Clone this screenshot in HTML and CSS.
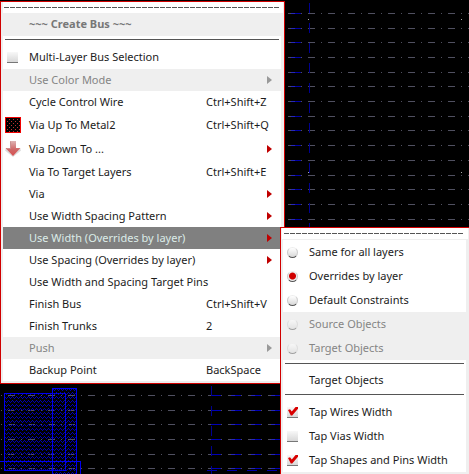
FILE: index.html
```html
<!DOCTYPE html>
<html lang="en">
<head>
<meta charset="utf-8">
<title>Create Bus</title>
<link rel="stylesheet" href="styles.css">
</head>
<body>
<svg class="canvas" aria-hidden="true" shape-rendering="crispEdges">
  <defs>
    <pattern id="hatch" width="4" height="4" patternUnits="userSpaceOnUse">
      <path d="M0 0h1v1h-1zM1 1h1v1h-1zM2 2h1v1h-1zM3 1h1v1h-1z" fill="#0000b4"/>
    </pattern>
  </defs>
  <g class="tracks" transform="translate(0 .5)">
    <path d="M-12 13H2000M-12 28H2000M-12 42H2000M-12 57H2000M-12 72H2000M-12 86H2000M-12 101H2000M-12 116H2000M-12 130H2000M-12 145H2000M-12 160H2000M-12 175H2000M-12 189H2000M-12 204H2000M-12 219H2000M-12 395H2000M-12 410H2000M-12 424H2000M-12 439H2000M-12 454H2000M-12 468H2000"/>
  </g>
  <g transform="translate(0 .5)" fill="none">
    <path stroke="#0000a8" d="M291 13h10M291 28h10M291 42h10M291 57h10M291 72h10M291 86h10M291 101h10M291 116h10M291 130h10M291 145h10M291 160h10M291 175h10M291 189h10M291 204h10M291 219h10"/>
    <path stroke="#2828b8" d="M291 13h4M291 28h4M291 42h4M291 57h4M291 72h4M291 86h4M291 101h4M291 116h4M291 130h4M291 145h4M291 160h4M291 175h4M291 189h4M291 204h4M291 219h4"/>
    <path stroke="#0000b8" stroke-dasharray="10 10" d="M211 395h70M211 410h70M211 424h70M211 439h70M211 454h70M211 468h70"/>
    <path stroke="#2828b8" stroke-dasharray="4 16" d="M231 395h50M231 410h50M231 424h50M231 439h50M231 454h50M231 468h50"/>
    <path stroke="#0000a8" stroke-dasharray="10 10" d="M207 470h74"/>
  </g>
  <g stroke="#000090" stroke-dasharray="10 10">
    <path d="M309.500 3V227M211.500 386V474"/>
  </g>
  <path fill="#aaa" d="M308 19h1v1h-1zM461 19h1v1h-1zM308 172h1v1h-1zM461 172h1v1h-1z"/>
  <g fill="url(#hatch)" stroke="#0000f0">
    <rect x="4.500" y="393.500" width="61" height="77"/>
    <rect x="52.500" y="388.500" width="24" height="100"/>
    <rect x="-1.500" y="461.500" width="82" height="40" fill="none"/>
  </g>
</svg>

<main class="menu">
  <div class="tear"></div>
  <h1 class="title">~~~ Create Bus ~~~</h1>
  <hr>
  <label class="item tall"><input type="checkbox"><span>Multi-Layer Bus Selection</span></label>
  <button class="item sub" disabled><span>Use Color Mode</span></button>
  <button class="item"><span>Cycle Control Wire</span><kbd>Ctrl+Shift+Z</kbd></button>
  <button class="item tall">
    <svg class="icon" viewBox="0 0 16 16" shape-rendering="crispEdges" aria-hidden="true">
      <defs><pattern id="dots" width="4" height="4" patternUnits="userSpaceOnUse"><path d="M0 2h1v1h-1zM2 0h1v1h-1z" fill="#c03030"/></pattern></defs>
      <rect width="16" height="16" fill="#f00000"/><rect x="1" y="1" width="14" height="14"/><rect x="1" y="1" width="14" height="14" fill="url(#dots)"/>
    </svg>
    <span>Via Up To Metal2</span><kbd>Ctrl+Shift+Q</kbd></button>
  <button class="item tall sub">
    <svg class="icon" viewBox="0 0 16 16" aria-hidden="true">
      <defs><linearGradient id="fade" x2="0" y2="1"><stop stop-color="#deb4b4"/><stop offset=".55" stop-color="#cf6868"/><stop offset="1" stop-color="#d85050"/></linearGradient></defs>
      <path d="M0 9.500 8 16 16 9.500 15 7.500H1z" fill="#ddd"/>
      <path d="M5 0h6v7h4.500L8 15 .5 7H5z" fill="url(#fade)"/>
      <path d="M5.500 .5V7.500H2" fill="none" stroke="#c89090"/>
    </svg>
    <span>Via Down To ...</span></button>
  <button class="item"><span>Via To Target Layers</span><kbd>Ctrl+Shift+E</kbd></button>
  <button class="item sub"><span>Via</span></button>
  <button class="item sub"><span>Use Width Spacing Pattern</span></button>
  <button class="item sub open"><span>Use Width (Overrides by layer)</span></button>
  <button class="item sub"><span>Use Spacing (Overrides by layer)</span></button>
  <button class="item"><span>Use Width and Spacing Target Pins</span></button>
  <button class="item"><span>Finish Bus</span><kbd>Ctrl+Shift+V</kbd></button>
  <button class="item"><span>Finish Trunks</span><kbd>2</kbd></button>
  <button class="item sub" disabled><span>Push</span></button>
  <button class="item"><span>Backup Point</span><kbd>BackSpace</kbd></button>
</main>

<section class="menu submenu" aria-label="Use Width">
  <div class="tear"></div>
  <label class="item tall"><input type="radio" name="width"><span>Same for all layers</span></label>
  <label class="item tall"><input type="radio" name="width" checked><span>Overrides by layer</span></label>
  <label class="item tall"><input type="radio" name="width"><span>Default Constraints</span></label>
  <label class="item tall off"><input type="radio" name="width" disabled><span>Source Objects</span></label>
  <label class="item tall off"><input type="radio" name="width" disabled><span>Target Objects</span></label>
  <hr>
  <button class="item"><span>Target Objects</span></button>
  <hr>
  <label class="item tall"><input type="checkbox" checked><span>Tap Wires Width</span></label>
  <label class="item tall"><input type="checkbox"><span>Tap Vias Width</span></label>
  <label class="item tall"><input type="checkbox" checked><span>Tap Shapes and Pins Width</span></label>
</section>
</body>
</html>
```
FILE: styles.css
```css
* {
  box-sizing: border-box;
}

body {
  position: relative;
  min-height: 100vh;
  margin: 0;
  padding-top: 1px;
  overflow: hidden;
  background: #000;
  color: #1c1c1c;
  font: 11px/16px "Noto Sans", "Open Sans", sans-serif;
}

.canvas {
  position: absolute;
  inset: 0;
  width: 100%;
  height: 100%;
}

.tracks {
  fill: none;
  stroke: #505060;
  stroke-dasharray: 7 6 1 6;
}

.menu {
  position: relative;
  width: max-content;
  min-width: 285px;
  padding: 0 3px 2px 2px;
  border: 1px solid #d00000;
  background: #efefef;
}

.submenu {
  position: absolute;
  top: 227px;
  right: 0;
  bottom: 0;
  left: 280px;
  width: auto;
  min-width: 0;
  border-width: 1px 0 0 1px;
}

.tear {
  height: 11px;
  margin-right: -2px;
  padding: 5px 4px 5px 1px;
  background: repeating-linear-gradient(90deg, #555 0 5px, #fff 5px 6px) content-box, #fff;
}

.submenu .tear {
  margin: 0 -2px 1px -1px;
  padding-left: 2px;
}

.title {
  margin: 0 -2px 0 0;
  padding: 3px 26px 4px;
  color: #777;
  font-size: 11px;
  line-height: 16px;
}

hr {
  height: 9px;
  margin: 0;
  border: solid #fff;
  border-width: 3px 2px 5px;
  background: #555;
}

.item {
  display: grid;
  grid-template-columns: 20px 1fr 75px;
  align-items: center;
  width: 100%;
  height: 22px;
  padding: 0;
  border: 0;
  background: #fff;
  color: inherit;
  font: inherit;
  text-align: left;
  white-space: nowrap;
}

.tall {
  height: 24px;
}

.item span {
  grid-area: 1 / 2 / 2 / 4;
  padding-left: 6px;
}

.item kbd {
  grid-area: 1 / 3;
  font: inherit;
}

.item:disabled,
.off {
  background: #efefef;
  color: #858585;
}

.open {
  background: #808080;
  color: #dcece8;
}

.sub::after {
  grid-area: 1 / 3;
  justify-self: end;
  width: 5px;
  height: 8px;
  margin-right: 9px;
  background: #c00000;
  clip-path: polygon(0 0, 100% 50%, 0 100%);
  content: "";
}

.sub:disabled::after {
  background: #999;
}

.icon {
  width: 16px;
  height: 16px;
  margin-left: 2px;
}

input {
  appearance: none;
  width: 11px;
  height: 11px;
  margin: 0 0 0 4px;
  border-bottom: 1px solid #777;
  background: linear-gradient(#f8f8f8, #d8d8d8);
}

input[type="checkbox"]:checked::after {
  display: block;
  width: 10px;
  height: 9px;
  margin-left: 1px;
  background: #d80000;
  clip-path: polygon(0 40%, 20% 30%, 38% 55%, 80% 0, 100% 0, 100% 25%, 42% 100%, 28% 100%);
  content: "";
}

input[type="radio"] {
  border: 1px solid #ccc;
  border-top-color: #eee;
  border-bottom-color: #555;
  border-radius: 50%;
  background: linear-gradient(#fff, #d8d8d8);
}

input[type="radio"]:checked {
  background: radial-gradient(circle at 50% 45%, #d00000 0 3px, #eee 4px);
}

input:disabled {
  opacity: 0.5;
}
```
